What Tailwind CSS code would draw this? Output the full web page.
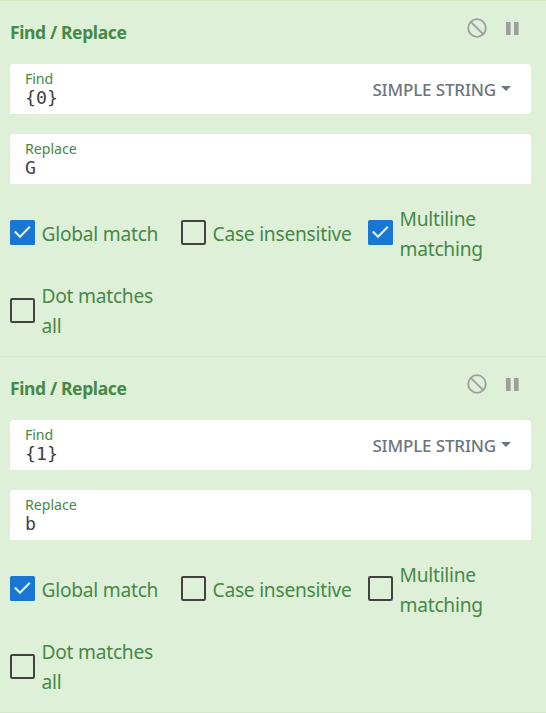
<!DOCTYPE html>
<html lang="en">
<head>
<meta charset="utf-8">
<title>Recipe</title>
<script src="https://cdn.jsdelivr.net/npm/@tailwindcss/browser@4"></script>
</head>
<body class="w-[546px] h-[713px] overflow-hidden bg-[#dff0d8] font-['Noto_Sans',sans-serif] text-[#468847]">
<svg class="hidden">
  <symbol id="ban" viewBox="0 0 20 20"><g fill="none" stroke="#9e9e9e" stroke-width="1.8"><circle cx="10" cy="10" r="8.8"/><path d="M3.8 3.8 16.2 16.2"/></g></symbol>
  <symbol id="pause" viewBox="0 0 13 13"><path fill="#9e9e9e" d="M0 0h4.6v13H0zM8 0h4.6v13H8z"/></symbol>
  <symbol id="on" viewBox="0 0 25 25"><rect width="25" height="25" rx="1.5" fill="#1976d2"/><path d="M4.8 11.4 10 16.7 19.8 6.8" fill="none" stroke="#dff0d8" stroke-width="2.2"/></symbol>
  <symbol id="off" viewBox="0 0 25 25"><rect x="1" y="1" width="23" height="23" rx="1.2" fill="none" stroke="#424242" stroke-width="2"/></symbol>
</svg>
<main id="list" class="border-b border-[#d6e9c6]"></main>
<template id="op">
  <section class="h-[356px] border-t border-[#d6e9c6] px-[10px]">
    <header class="h-[63px] flex justify-between">
      <h2 class="mt-[19px] h-6 leading-6 text-[17.5px] font-bold tracking-[-0.38px] whitespace-nowrap">Find / Replace</h2>
      <div class="flex mt-[17px] mr-[17px] gap-[19px] items-start">
        <svg class="w-5 h-5"><use href="#ban"/></svg>
        <svg class="w-[13px] h-[13px] mt-[4px]"><use href="#pause"/></svg>
      </div>
    </header>
    <div class="w-[521px] h-[50px] bg-white rounded-t-[4px] rounded-br-[4px] pl-[15px] pr-[20px] flex justify-between items-start">
      <div class="pt-[5px]">
        <div class="h-[19px] leading-[19px] text-[14.2px] tracking-[-0.1px]">Find</div>
        <div data-find class="h-5 leading-5 text-[18.2px] font-['DejaVu_Sans_Mono',monospace] text-[#424242]"></div>
      </div>
      <div class="flex items-center h-[50px] gap-[5px] pt-px text-[#6c757d]">
        <span class="text-[17px] font-medium tracking-[-0.15px] whitespace-nowrap">SIMPLE STRING</span>
        <svg class="w-[10px] h-[5px] -mt-[2px]" viewBox="0 0 10 5"><path fill="currentColor" d="M0 0h10L5 5z"/></svg>
      </div>
    </div>
    <div class="mt-5 w-[521px] h-[50px] bg-white rounded-t-[4px] pl-[15px] pt-[5px]">
      <div class="h-[19px] leading-[19px] text-[14.2px] tracking-[-0.05px]">Replace</div>
      <div data-rep class="h-5 leading-5 text-[18.2px] font-['DejaVu_Sans_Mono',monospace] text-[#424242]"></div>
    </div>
    <div class="mt-5 h-[60px] flex items-center text-[19.2px] leading-[30px] tracking-[-0.25px]">
      <label class="w-[171px] flex items-center gap-[6.5px] whitespace-nowrap"><svg class="w-[25px] h-[25px] -mt-[3px]"><use href="#on"/></svg><span>Global match</span></label>
      <label class="w-[187px] flex items-center gap-[6.5px] whitespace-nowrap"><svg class="w-[25px] h-[25px] -mt-[3px]"><use href="#off"/></svg><span>Case insensitive</span></label>
      <label class="flex items-center gap-[6.5px]"><svg class="w-[25px] h-[25px] -mt-[3px]"><use data-multi href="#off"/></svg><span>Multiline<br>matching</span></label>
    </div>
    <label class="mt-[17px] h-[60px] flex items-center gap-[6.5px] text-[19.2px] leading-[30px] tracking-[-0.25px]"><svg class="w-[25px] h-[25px] -mt-[1px]"><use href="#off"/></svg><span>Dot matches<br>all</span></label>
  </section>
</template>
<script>
for (const [find, rep, multi] of [['{0}', 'G', '#on'], ['{1}', 'b', '#off']]) {
  const n = document.getElementById('op').content.cloneNode(true);
  n.querySelector('[data-find]').textContent = find;
  n.querySelector('[data-rep]').textContent = rep;
  n.querySelector('[data-multi]').setAttribute('href', multi);
  document.getElementById('list').append(n);
}
</script>
</body>
</html>
